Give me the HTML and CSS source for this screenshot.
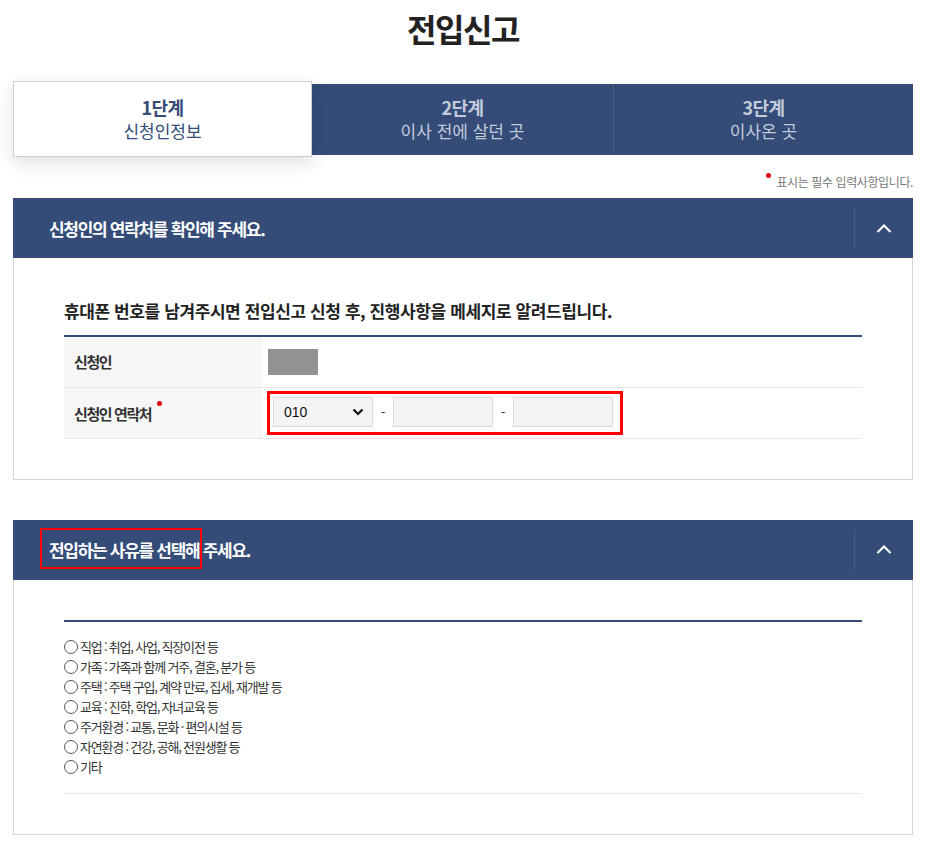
FILE: index.html
```html
<!DOCTYPE html>
<html lang="ko">
<head>
<meta charset="utf-8">
<title>전입신고</title>
<link rel="stylesheet" href="styles.css">
</head>
<body>
<div class="page">
  <h1 class="title">전입신고</h1>

  <div class="steps">
    <div class="step active">
      <strong class="step-num">1단계</strong>
      <span class="step-name">신청인정보</span>
    </div>
    <div class="step">
      <strong class="step-num">2단계</strong>
      <span class="step-name">이사 전에 살던 곳</span>
    </div>
    <div class="step">
      <strong class="step-num">3단계</strong>
      <span class="step-name">이사온 곳</span>
    </div>
  </div>

  <p class="req-note"><span class="req-dot"></span>표시는 필수 입력사항입니다.</p>

  <section class="panel">
    <div class="panel-head">
      <h2 class="panel-title">신청인의 연락처를 확인해 주세요.</h2>
      <button class="toggle" type="button" aria-label="접기">
        <svg width="16" height="9" viewBox="0 0 16 9"><polyline points="1.5,8 8,1.5 14.5,8" fill="none" stroke="#fff" stroke-width="2"/></svg>
      </button>
    </div>
    <div class="panel-body">
      <h3 class="body-title">휴대폰 번호를 남겨주시면 전입신고 신청 후, 진행사항을 메세지로 알려드립니다.</h3>
      <table class="form-table">
        <tr>
          <th>신청인</th>
          <td><span class="masked"></span></td>
        </tr>
        <tr>
          <th>신청인 연락처<span class="req-dot sup"></span></th>
          <td>
            <div class="phone">
              <div class="select-box">
                <span>010</span>
                <svg width="12" height="8" viewBox="0 0 12 8"><polyline points="1.5,1.5 6,6 10.5,1.5" fill="none" stroke="#111" stroke-width="2.2"/></svg>
              </div>
              <span class="dash">-</span>
              <span class="text-box"></span>
              <span class="dash">-</span>
              <span class="text-box"></span>
            </div>
          </td>
        </tr>
      </table>
    </div>
  </section>

  <section class="panel">
    <div class="panel-head">
      <h2 class="panel-title">전입하는 사유를 선택해 주세요.</h2>
      <span class="mark-box"></span>
      <button class="toggle" type="button" aria-label="접기">
        <svg width="16" height="9" viewBox="0 0 16 9"><polyline points="1.5,8 8,1.5 14.5,8" fill="none" stroke="#fff" stroke-width="2"/></svg>
      </button>
    </div>
    <div class="panel-body reason-body">
      <div class="reason-box">
        <ul class="reasons">
          <li><span class="radio"></span>직업 : 취업, 사업, 직장이전 등</li>
          <li><span class="radio"></span>가족 : 가족과 함께 거주, 결혼, 분가 등</li>
          <li><span class="radio"></span>주택 : 주택 구입, 계약 만료, 집세, 재개발 등</li>
          <li><span class="radio"></span>교육 : 진학, 학업, 자녀교육 등</li>
          <li><span class="radio"></span>주거환경 : 교통, 문화 · 편의시설 등</li>
          <li><span class="radio"></span>자연환경 : 건강, 공해, 전원생활 등</li>
          <li><span class="radio"></span>기타</li>
        </ul>
      </div>
    </div>
  </section>
</div>
</body>
</html>
```

FILE: styles.css
```css
* { box-sizing: border-box; }

body {
  margin: 0;
  background: #fff;
  font-family: "Noto Sans CJK KR", "Noto Sans", sans-serif;
  color: #222;
}

.page {
  width: 900px;
  margin-left: 13px;
  padding-top: 8px;
}

.title {
  margin: 0;
  text-align: center;
  font-size: 32px;
  line-height: 40px;
  font-weight: 700;
  letter-spacing: -1.5px;
  color: #222;
}

.steps {
  display: flex;
  align-items: center;
  margin-top: 33px;
  height: 76px;
}

.step {
  flex: 0 0 300px;
  height: 71px;
  background: #344c77;
  display: flex;
  flex-direction: column;
  align-items: center;
  justify-content: center;
  color: #c3cbdc;
}

.step + .step { border-left: 1px solid #4b5f87; }
.step.active + .step { border-left: 0; }

.step.active {
  flex-basis: 299px;
  height: 76px;
  background: #fff;
  border: 1px solid #c9ced9;
  box-shadow: 0 6px 16px rgba(40, 50, 80, 0.15);
  color: #344c77;
  position: relative;
  z-index: 1;
}

.step.active + .step { flex-basis: 301px; }

.step-num {
  font-size: 18px;
  line-height: 24px;
  font-weight: 700;
  letter-spacing: -0.6px;
}

.step-name {
  font-size: 17px;
  line-height: 24px;
  letter-spacing: 0;
  word-spacing: 0;
}

.req-note {
  margin: 16px 0 7px;
  text-align: right;
  font-size: 12px;
  line-height: 18px;
  color: #777;
  letter-spacing: -0.4px;
}

.req-dot {
  display: inline-block;
  width: 5px;
  height: 5px;
  border-radius: 50%;
  background: #e60012;
  vertical-align: top;
  margin: 0 5px 0 0;
}

.req-dot.sup {
  margin: 0 0 0 6px;
  vertical-align: 14px;
}

.panel { margin-bottom: 40px; }

.panel-head {
  position: relative;
  height: 60px;
  background: #344c77;
  display: flex;
  align-items: center;
  justify-content: space-between;
  padding-left: 36px;
}

.panel-title {
  margin: 0;
  color: #fff;
  font-size: 17px;
  font-weight: 700;
  letter-spacing: -1.3px;
}

.toggle {
  width: 59px;
  height: 40px;
  border: 0;
  border-left: 1px solid #4b5f87;
  background: transparent;
  padding: 0;
  display: flex;
  align-items: center;
  justify-content: center;
}

.mark-box {
  position: absolute;
  left: 27px;
  top: 8px;
  width: 162px;
  height: 41px;
  border: 2.5px solid #f00;
}

.panel-body {
  border: 1px solid #d6d6d6;
  border-top: 0;
  padding: 41px 50px 40px;
}

.panel-body.reason-body { padding-top: 40px; }

.body-title {
  margin: 0 0 12px;
  font-size: 17px;
  line-height: 24px;
  font-weight: 700;
  letter-spacing: -0.4px;
  color: #222;
}

.form-table {
  width: 100%;
  border-collapse: collapse;
  border-top: 2px solid #344c77;
}

.form-table tr { border-bottom: 1px solid #e8e8e8; }

.form-table th {
  width: 199px;
  height: 51px;
  background: #f7f7f7;
  text-align: left;
  padding: 0 0 0 10px;
  font-size: 15px;
  font-weight: 700;
  letter-spacing: -1.4px;
  color: #333;
}

.form-table td {
  padding: 0 0 0 4px;
}

.masked {
  display: block;
  width: 50px;
  height: 26px;
  margin-left: 1px;
  background: #929292;
}

.phone {
  display: inline-flex;
  align-items: center;
  border: 3px solid #f00;
  padding: 3px 7px 5px 3px;
}

.select-box {
  width: 100px;
  height: 30px;
  background: #f4f4f4;
  border: 1px solid #d9d9d9;
  display: flex;
  align-items: center;
  justify-content: space-between;
  padding: 0 8px 0 10px;
  font-family: "Liberation Sans", Arial, sans-serif;
  font-size: 14px;
  color: #111;
}

.text-box {
  display: block;
  width: 100px;
  height: 30px;
  background: #f4f4f4;
  border: 1px solid #d9d9d9;
}

.dash {
  width: 20px;
  text-align: center;
  font-size: 13px;
  color: #333;
}

.reason-box {
  border-top: 2px solid #344c77;
  border-bottom: 1px solid #e8e8e8;
  padding: 15px 0 16px;
}

.reasons {
  list-style: none;
  margin: 0;
  padding: 0;
}

.reasons li {
  display: flex;
  align-items: center;
  height: 20px;
  font-size: 13px;
  letter-spacing: -1.2px;
  word-spacing: 0;
  color: #333;
}

.radio {
  width: 14px;
  height: 14px;
  border: 1px solid #555;
  border-radius: 50%;
  margin-right: 2px;
  flex: none;
}
```
